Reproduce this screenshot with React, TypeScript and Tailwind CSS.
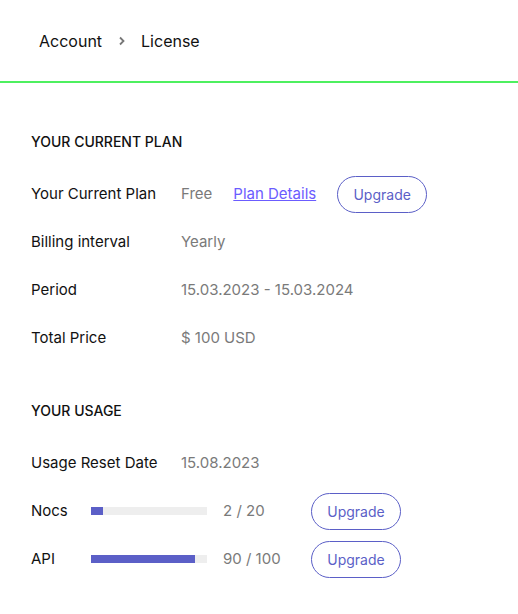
import React from "react";

const Upgrade = () => (
  <button className="h-[37px] w-[90px] rounded-full border border-[#5b5fc7] text-[14px] text-[#5b5fc7] bg-white">
    Upgrade
  </button>
);

const Row = ({ label, children }: { label: string; children: React.ReactNode }) => (
  <div className="flex h-12 items-center">
    <div className="w-[150px] text-[#111]">{label}</div>
    {children}
  </div>
);

const Usage = ({ label, used, total }: { label: string; used: number; total: number }) => (
  <div className="flex h-12 items-center">
    <div className="w-[60px] text-[#111]">{label}</div>
    <div className="h-2 w-[116px] bg-[#eeeeee]">
      <div className="h-2 bg-[#5b5fc7]" style={{ width: `${(used / total) * 100}%` }} />
    </div>
    <div className="ml-4 w-[88px] text-[#7a7a7a]">
      {used} / {total}
    </div>
    <Upgrade />
  </div>
);

export default function App() {
  return (
    <div className="min-h-screen bg-white text-[15px]" style={{ fontFamily: "Inter, sans-serif" }}>
      <div className="flex h-[83px] items-center border-b-2 border-[#4df05f] pl-[39px] text-[16px] text-[#111]">
        <span>Account</span>
        <svg className="ml-[15px] mr-[14px]" width="10" height="10" viewBox="0 0 10 10" fill="none">
          <path d="M3 1.5 L6.5 5 L3 8.5" stroke="#777" strokeWidth="1.8" />
        </svg>
        <span>License</span>
      </div>
      <div className="pl-[31px] pt-[49px]">
        <div className="mb-[18px] text-[14px] font-medium leading-5 text-[#111]">YOUR CURRENT PLAN</div>
        <Row label="Your Current Plan">
          <div className="flex items-center">
            <span className="text-[#7a7a7a]">Free</span>
            <a href="#" className="ml-[21px] text-[#6b5cff] underline">Plan Details</a>
            <span className="ml-[21px]">
              <Upgrade />
            </span>
          </div>
        </Row>
        <Row label="Billing interval">
          <span className="text-[#7a7a7a]">Yearly</span>
        </Row>
        <Row label="Period">
          <span className="text-[#7a7a7a]">15.03.2023 - 15.03.2024</span>
        </Row>
        <Row label="Total Price">
          <span className="text-[#7a7a7a]">$ 100 USD</span>
        </Row>
        <div className="mb-[18px] mt-[39px] text-[14px] font-medium leading-5 text-[#111]">YOUR USAGE</div>
        <Row label="Usage Reset Date">
          <span className="text-[#7a7a7a]">15.08.2023</span>
        </Row>
        <Usage label="Nocs" used={2} total={20} />
        <Usage label="API" used={90} total={100} />
      </div>
    </div>
  );
}
